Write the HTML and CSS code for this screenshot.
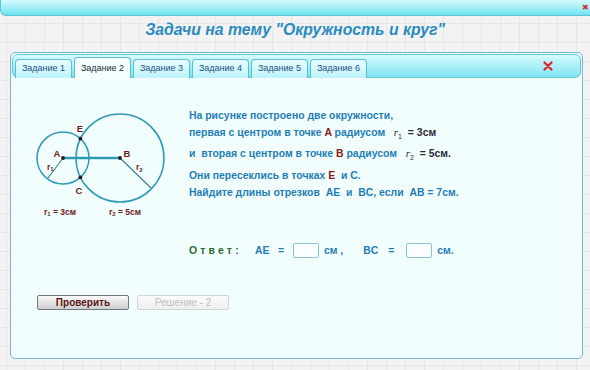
FILE: index.html
```html
<!DOCTYPE html>
<html lang="ru">
<head>
<meta charset="utf-8">
<link rel="stylesheet" href="styles.css">
</head>
<body>
<div class="topbar"><span class="topclose">✖</span></div>
<h1 class="title">Задачи на тему "Окружность и круг"</h1>
<div class="panel">
  <div class="tabbar">
    <div class="tab">Задание 1</div>
    <div class="tab active">Задание 2</div>
    <div class="tab">Задание 3</div>
    <div class="tab">Задание 4</div>
    <div class="tab">Задание 5</div>
    <div class="tab">Задание 6</div>
    <svg class="tabclose" width="10" height="10" viewBox="0 0 10 10"><path d="M1.5 1.5 L8.5 8.5 M8.5 1.5 L1.5 8.5" stroke="#e3222a" stroke-width="2.2" stroke-linecap="round"/></svg>
  </div>
  <div class="task">
    <svg class="figure" width="177" height="150" viewBox="11 78 177 150">
      <circle cx="62" cy="158" r="26" fill="none" stroke="#2e9bb6" stroke-width="1.5"/>
      <circle cx="119" cy="158" r="44" fill="none" stroke="#2e9bb6" stroke-width="1.5"/>
      <line x1="62" y1="158" x2="119" y2="158" stroke="#2e9bb6" stroke-width="2.4"/>
      <line x1="62" y1="158" x2="47" y2="178" stroke="#357f8f" stroke-width="1.1"/>
      <line x1="119" y1="158" x2="150" y2="188" stroke="#357f8f" stroke-width="1.1"/>
      <circle cx="62" cy="158" r="1.9" fill="#2a1a1a"/>
      <circle cx="119" cy="158" r="1.9" fill="#2a1a1a"/>
      <circle cx="79.4" cy="138.7" r="1.9" fill="#2a1a1a"/>
      <circle cx="79.4" cy="177.3" r="1.9" fill="#2a1a1a"/>
      <g class="lbl">
        <text x="79" y="131.5" text-anchor="middle">E</text>
        <text x="56" y="156.5" text-anchor="middle">A</text>
        <text x="126" y="156.5" text-anchor="middle">B</text>
        <text x="78" y="193.5" text-anchor="middle">C</text>
        <text x="46" y="169.5" class="small">r<tspan class="sub" dy="1.5">1</tspan></text>
        <text x="135" y="170" class="small">r<tspan class="sub" dy="1.5">2</tspan></text>
        <text x="43" y="214.5" class="small">r<tspan class="sub" dy="1.5">1</tspan><tspan dy="-1.5"> = 3см</tspan></text>
        <text x="108" y="214.5" class="small">r<tspan class="sub" dy="1.5">2</tspan><tspan dy="-1.5"> = 5см</tspan></text>
      </g>
    </svg>
    <div class="problem">
      <div class="line">На рисунке построено две окружности,</div>
      <div class="line">первая с центром в точке <span class="pt">A</span> радиусом &nbsp; <span class="r">r<sub>1</sub></span> &nbsp;<span class="val">= 3см</span></div>
      <div class="line g4">и &nbsp;вторая с центром в точке <span class="pt">B</span> радиусом &nbsp; <span class="r">r<sub>2</sub></span> &nbsp;<span class="val">= 5см.</span></div>
      <div class="line g5">Они пересеклись в точках <span class="pt">E</span> &nbsp;и С.</div>
      <div class="line">Найдите длины отрезков &nbsp;AE &nbsp;и &nbsp;BC, если &nbsp;AB = 7см.</div>
    </div>
  </div>
  <div class="answer">
    <span class="otvet">Ответ:</span>
    <span class="seg">AE</span><span class="eq">=</span><span class="box"></span><span class="unit">см ,</span>
    <span class="seg seg2">BC</span><span class="eq eq2">=</span><span class="box"></span><span class="unit">см.</span>
  </div>
  <div class="buttons">
    <button class="btn">Проверить</button>
    <button class="btn disabled">Решение - 2</button>
  </div>
</div>
</body>
</html>
```
FILE: styles.css
```css
* { box-sizing: border-box; }
html, body { margin: 0; padding: 0; }
body {
  width: 590px;
  height: 370px;
  overflow: hidden;
  font-family: "Liberation Sans", Arial, sans-serif;
  background-color: #f3f3f3;
  background-image:
    linear-gradient(to right, #e6e6e6 1px, transparent 1px),
    linear-gradient(to bottom, #e6e6e6 1px, transparent 1px);
  background-size: 19px 19px;
  background-position: 6px 4px;
}
.topbar {
  height: 16px;
  border-bottom: 1px solid #62c3d2;
  border-left: 1px solid #62c3d2;
  border-bottom-left-radius: 6px;
  background: linear-gradient(to bottom, #d6fafd 0%, #a9f0f8 45%, #6ee3f1 100%);
  position: relative;
}
.topclose {
  position: absolute;
  right: 1px;
  top: 3px;
  font-size: 8px;
  color: #d52a2a;
  line-height: 10px;
}
.title {
  margin: 0;
  height: 36px;
  padding-top: 5px;
  text-align: center;
  font-size: 15.8px;
  font-style: italic;
  font-weight: bold;
  color: #2b8bc0;
  line-height: 18px;
}
.panel {
  margin: 0 7px 0 10px;
  height: 307px;
  border: 1px solid #74b7c6;
  border-radius: 5px;
  background: #f2fefe;
  padding: 1px;
}
.tabbar {
  height: 24px;
  display: flex;
  align-items: flex-end;
  gap: 2px;
  padding-left: 2px;
  border: 1px solid #67c6d6;
  border-radius: 6px;
  background: linear-gradient(to bottom, #d9fbfe 0%, #aaf0f8 50%, #7fe4f2 100%);
  position: relative;
}
.tab {
  width: 57px;
  height: 19px;
  margin-bottom: -1px;
  border: 1px solid #5cbfd0;
  border-bottom: none;
  border-radius: 4px 4px 0 0;
  background: linear-gradient(to bottom, #e8fdff 0%, #bdf4fb 100%);
  font-size: 9px;
  color: #1d4f80;
  text-align: center;
  line-height: 17px;
}
.tab.active {
  height: 21px;
  background: #f6ffff;
  color: #202a3a;
  line-height: 20px;
}
.tabclose {
  position: absolute;
  left: 530px;
  top: 6px;
}
.task {
  display: flex;
  align-items: flex-start;
}
.figure { display: block; flex: none; }
.lbl text {
  font-family: "Liberation Sans", Arial, sans-serif;
  font-weight: bold;
  font-size: 9.5px;
  fill: #6e1d1d;
}
.lbl text.small { font-size: 8.5px; }
.lbl .sub { font-size: 6px; }
.problem {
  padding-top: 29px;
  font-size: 10.45px;
  font-weight: bold;
  color: #1f7db5;
}
.line {
  line-height: 17px;
  height: 17px;
  white-space: nowrap;
}
.line.g4 { margin-top: 4px; }
.line.g5 { margin-top: 5px; }
.pt { color: #8a1c1c; }
.r {
  font-style: italic;
  font-weight: normal;
  color: #2a2a3a;
  font-family: "Liberation Serif", serif;
  font-size: 11px;
}
.r sub { font-size: 7px; font-style: normal; font-family: "Liberation Sans", sans-serif; }
.val { color: #2a2a3a; }
.answer {
  margin-top: 14px;
  margin-left: 177px;
  display: flex;
  align-items: center;
  height: 16px;
  font-size: 10.4px;
  font-weight: bold;
  color: #1f7db5;
}
.otvet {
  color: #2c6a2c;
  letter-spacing: 3.2px;
  width: 66px;
}
.seg { width: 23px; }
.seg2 { width: 25px; margin-left: 20px; }
.eq { width: 15px; }
.eq2 { width: 18px; }
.box {
  width: 26px;
  height: 15px;
  border: 1px solid #86c4d6;
  border-radius: 2px;
  background: #fbfeff;
  margin-right: 5px;
}
.answer .unit { white-space: pre; }
.buttons {
  margin-top: 37px;
  margin-left: 25px;
  display: flex;
  gap: 8px;
}
.btn {
  width: 92px;
  height: 15px;
  padding: 0;
  border: 1px solid #6b7a80;
  border-radius: 2px;
  background: linear-gradient(to bottom, #fbfbfb 0%, #e4e4e4 50%, #cfcfcf 100%);
  font-family: "Liberation Sans", Arial, sans-serif;
  font-size: 10px;
  font-weight: bold;
  color: #5a1414;
  line-height: 13px;
}
.btn.disabled {
  border-color: #cfd4d6;
  background: linear-gradient(to bottom, #fbfbfb 0%, #efefef 100%);
  color: #c0c0c0;
  font-weight: normal;
}
```
